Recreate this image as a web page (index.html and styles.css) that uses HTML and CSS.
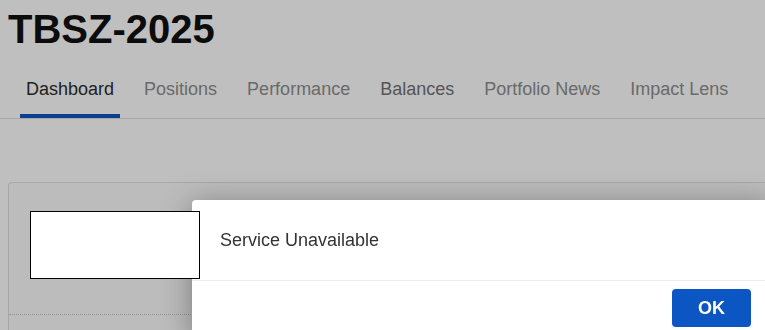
FILE: index.html
```html
<!DOCTYPE html>
<html lang="en">
<head>
    <meta charset="UTF-8">
    <meta name="viewport" content="width=device-width, initial-scale=1.0">
    <title>TBSZ-2025</title>
    <link rel="stylesheet" href="styles.css">
</head>
<body>
    <div class="page">
        <h1 class="account-title">TBSZ-2025</h1>

        <div class="tabs">
            <div class="tab active">Dashboard</div>
            <div class="tab">Positions</div>
            <div class="tab">Performance</div>
            <div class="tab hover">Balances</div>
            <div class="tab">Portfolio News</div>
            <div class="tab">Impact Lens</div>
        </div>

        <div class="card">
            <div class="widget-frame"></div>
            <div class="card-divider"></div>
        </div>
    </div>

    <div class="backdrop"></div>

    <div class="modal">
        <div class="modal-body">Service Unavailable</div>
        <div class="modal-footer">
            <button class="ok-button">OK</button>
        </div>
    </div>
</body>
</html>
```

FILE: styles.css
```css
body {
    font-family: "Liberation Sans", Arial, sans-serif;
    margin: 0;
    padding: 0;
    background-color: white;
    overflow: hidden;
}

.page {
    padding: 0 0 0 8px;
}

.account-title {
    margin: 0;
    padding-top: 5px;
    font-size: 40px;
    line-height: 48px;
    font-weight: 700;
    color: #111;
}

.tabs {
    display: flex;
    gap: 18px;
    margin: 13px 0 0 -8px;
    padding-left: 20px;
    border-bottom: 1px solid #e0e0e0;
}

.tab {
    padding: 12px 6px 14px;
    font-size: 18px;
    line-height: 22px;
    color: #8e8e8e;
    border-bottom: 4px solid transparent;
    white-space: nowrap;
}

.tab.active {
    color: #2d2d2d;
    border-bottom-color: #1254bf;
}

.tab.hover {
    color: #727272;
}

.card {
    margin-top: 63px;
    height: 300px;
    background-color: #fbfbfb;
    border: 1px solid #e0e0e0;
    border-right: none;
    border-radius: 4px 0 0 0;
    padding: 28px 0 0 21px;
}

.widget-frame {
    position: relative;
    z-index: 30;
    width: 168px;
    height: 66px;
    background-color: white;
    border: 1px solid #000;
}

.card-divider {
    margin: 35px 0 0 -21px;
    border-top: 1px dotted #c8c8c8;
}

.backdrop {
    position: fixed;
    top: 0;
    left: 0;
    right: 0;
    bottom: 0;
    background-color: rgba(0, 0, 0, 0.25);
    z-index: 10;
}

.modal {
    position: fixed;
    top: 200px;
    left: 192px;
    right: -6px;
    background-color: white;
    border-radius: 4px;
    box-shadow: 0 4px 30px rgba(0, 0, 0, 0.35);
    z-index: 20;
}

.modal-body {
    padding: 28px;
    font-size: 18px;
    line-height: 24px;
    color: #333;
    border-bottom: 1px solid #ececec;
}

.modal-footer {
    display: flex;
    justify-content: flex-end;
    padding: 8px 20px 10px;
}

.ok-button {
    width: 79px;
    height: 38px;
    border: none;
    border-radius: 4px;
    background-color: #0b56c2;
    color: white;
    font-family: "Liberation Sans", Arial, sans-serif;
    font-size: 18px;
    font-weight: 600;
}
```
